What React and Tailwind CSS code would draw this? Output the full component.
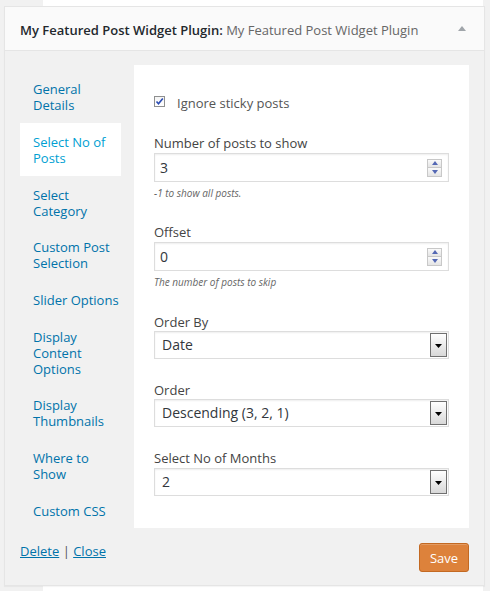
import React from "react";

function Spinner() {
  return (
    <div className="flex flex-col gap-0 mr-[6px]">
      <div className="w-[15px] h-[9px] border border-[#c8c8c8] bg-linear-to-b from-[#fafafa] to-[#e4e4e4] flex items-center justify-center">
        <svg width="6" height="4" viewBox="0 0 6 4"><path d="M0 4 L3 0 L6 4 Z" fill="#5468b4" /></svg>
      </div>
      <div className="w-[15px] h-[9px] border border-t-0 border-[#c8c8c8] bg-linear-to-b from-[#fafafa] to-[#e4e4e4] flex items-center justify-center">
        <svg width="6" height="4" viewBox="0 0 6 4"><path d="M0 0 L3 4 L6 0 Z" fill="#5468b4" /></svg>
      </div>
    </div>
  );
}

function NumberInput({ value }) {
  return (
    <div className="mt-[1px] h-[29px] border border-[#dddddd] bg-white shadow-[inset_0_1px_2px_rgba(0,0,0,0.07)] flex items-center justify-between pl-[5px]">
      <span className="text-[14px] text-[#32373c] leading-[20px]">{value}</span>
      <Spinner />
    </div>
  );
}

function SelectBox({ value, className = "" }) {
  return (
    <div className={"h-[28px] border border-[#dddddd] bg-white shadow-[inset_0_1px_2px_rgba(0,0,0,0.07)] flex items-center justify-between pl-[7px] pr-[1px] " + className}>
      <span className="text-[14px] text-[#32373c] leading-[20px]">{value}</span>
      <div className="w-[17px] h-[24px] border border-[#707070] bg-linear-to-b from-[#ffffff] to-[#d8d8d8] flex items-center justify-center">
        <svg width="7" height="4" viewBox="0 0 7 4" className="mt-[2px]"><path d="M0 0 L7 0 L3.5 4 Z" fill="#000" /></svg>
      </div>
    </div>
  );
}

const tabs = [
  ["General", "Details"],
  ["Select No of", "Posts"],
  ["Select", "Category"],
  ["Custom Post", "Selection"],
  ["Slider Options"],
  ["Display", "Content", "Options"],
  ["Display", "Thumbnails"],
  ["Where to", "Show"],
  ["Custom CSS"],
];

export default function App() {
  return (
    <div className="relative w-[490px] h-[591px] bg-[#f1f1f1] overflow-hidden font-['Open_Sans','Noto_Sans',sans-serif]">
      <div className="absolute left-[43px] top-0 w-[440px] h-full bg-white" />
      <div className="relative ml-[4px] mt-[6px] w-[481px] border border-[#e5e5e5] shadow-[0_1px_1px_rgba(0,0,0,0.04)] bg-[#f1f1f1]">
        {/* header */}
        <div className="h-[44px] bg-[#fafafa] border-b border-[#e5e5e5] flex items-center justify-between pl-[15px] pr-[18px] pt-[3px]">
          <div className="text-[13px] leading-[20px] whitespace-nowrap">
            <span className="font-semibold text-[#23282d]">My Featured Post Widget Plugin:</span>
            <span className="text-[#666666]"> My Featured Post Widget Plugin</span>
          </div>
          <svg width="8" height="5" viewBox="0 0 8 5" className="mb-[3px]"><path d="M0 5 L4 0 L8 5 Z" fill="#a0a5aa" /></svg>
        </div>
        {/* body */}
        <div className="px-[15px] pt-[14px] pb-[13px]">
          <div className="flex items-start gap-[13px] h-[463px]">
            <div className="w-[101px] pt-[5px] shrink-0">
              {tabs.map((lines, i) => (
                <div
                  key={i}
                  className={
                    "pl-[13px] pb-[10px] text-[13px] leading-[16px] " +
                    (i <= 1 ? "pt-[11px] " : "pt-[10.7px] ") +
                    (i === 1 ? "bg-white text-[#00a0d2]" : "text-[#0073aa]")
                  }
                >
                  {lines.map((l, j) => (
                    <div key={j}>{l}</div>
                  ))}
                </div>
              ))}
            </div>
            <div className="flex-1 bg-white pl-[20px] pr-[20px] pt-[28px] pb-[32px]">
              <div className="flex items-center h-[20px]">
                <div className="w-[11px] h-[11px] border border-[#8e8f8f] bg-linear-to-b from-[#f4f4f4] to-[#ffffff] flex items-center justify-center mt-[-3px]">
                  <svg width="9" height="9" viewBox="0 0 9 9"><path d="M1.5 4.5 L3.5 6.8 L7.8 1.5" stroke="#2a4bb3" strokeWidth="1.6" fill="none" /></svg>
                </div>
                <span className="ml-[12px] text-[13px] text-[#555] leading-[20px]">Ignore sticky posts</span>
              </div>

              <div className="mt-[21px] text-[13px] leading-[18px] text-[#444]">Number of posts to show</div>
              <NumberInput value="3" />
              <div className="mt-[4px] text-[10px] leading-[14px] italic text-[#666]">-1 to show all posts.</div>

              <div className="mt-[23px] text-[13px] leading-[18px] text-[#444]">Offset</div>
              <NumberInput value="0" />
              <div className="mt-[4px] text-[10px] leading-[14px] italic text-[#666]">The number of posts to skip</div>

              <div className="mt-[24px] text-[13px] leading-[18px] text-[#444]">Order By</div>
              <SelectBox value="Date" />

              <div className="mt-[22px] text-[13px] leading-[18px] text-[#444]">Order</div>
              <SelectBox value="Descending (3, 2, 1)" />

              <div className="mt-[22px] text-[13px] leading-[18px] text-[#444]">Select No of Months</div>
              <SelectBox value="2" className="mt-[1px]" />
            </div>
          </div>
          <div className="mt-[15px] flex items-start justify-between">
            <div className="mt-[-1px] text-[13px] leading-[18px] text-[#555]">
              <a className="text-[#0073aa] underline">Delete</a>
              <span> | </span>
              <a className="text-[#0073aa] underline">Close</a>
            </div>
            <button className="w-[50px] h-[29px] rounded-[3px] bg-[#dd823b] border border-[#c36922] text-white text-[13px] leading-[18px] shadow-[inset_0_1px_0_rgba(255,255,255,0.2)]">
              Save
            </button>
          </div>
        </div>
      </div>
    </div>
  );
}
